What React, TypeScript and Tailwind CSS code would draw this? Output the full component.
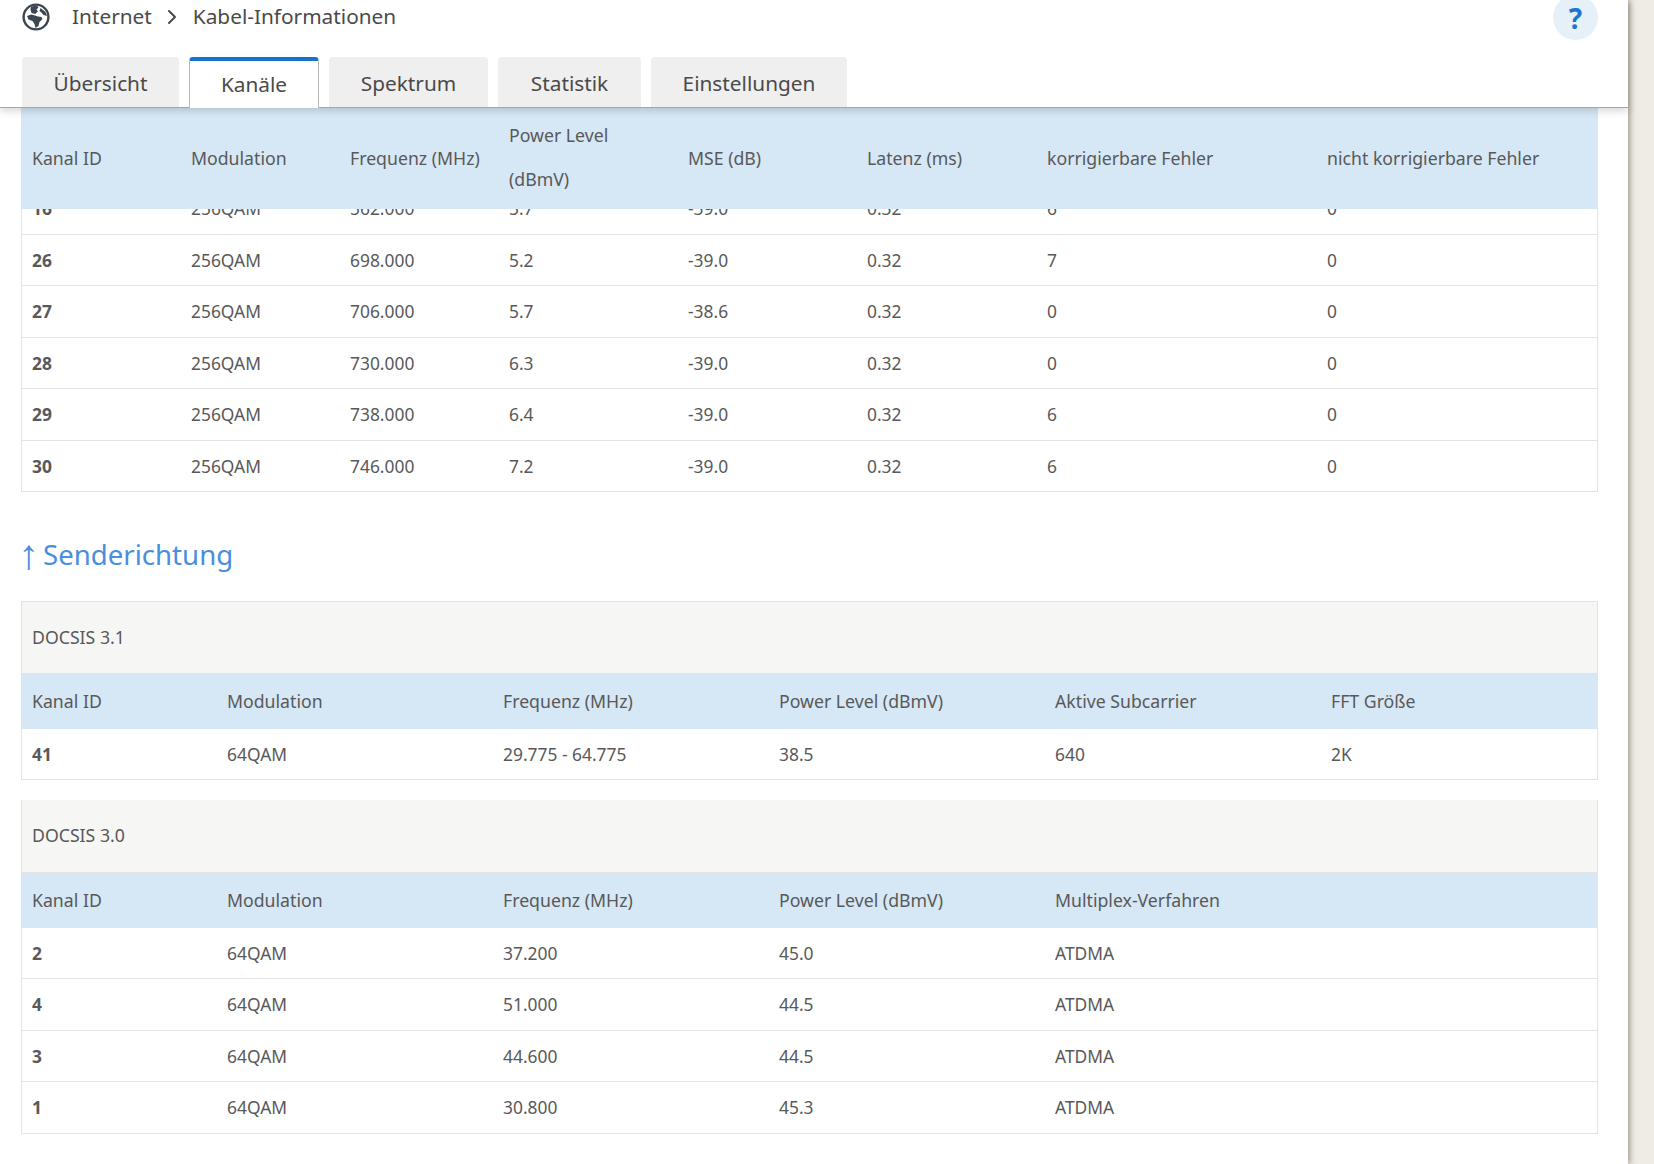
import { ChevronRight } from "lucide-react"

const downCols = "grid-cols-[159px_159px_159px_179px_179px_180px_280px_1fr]"
const upCols = "grid-cols-[195px_276px_276px_276px_276px_1fr]"

const tabs = [
  { label: "Übersicht", width: "w-[157px]" },
  { label: "Kanäle", width: "w-[130px]" },
  { label: "Spektrum", width: "w-[159px]" },
  { label: "Statistik", width: "w-[143px]" },
  { label: "Einstellungen", width: "w-[196px]" },
]
const downHead = ["Kanal ID", "Modulation", "Frequenz (MHz)", "", "MSE (dB)", "Latenz (ms)", "korrigierbare Fehler", "nicht korrigierbare Fehler"]

const downRows = [
  ["26", "256QAM", "698.000", "5.2", "-39.0", "0.32", "7", "0"],
  ["27", "256QAM", "706.000", "5.7", "-38.6", "0.32", "0", "0"],
  ["28", "256QAM", "730.000", "6.3", "-39.0", "0.32", "0", "0"],
  ["29", "256QAM", "738.000", "6.4", "-39.0", "0.32", "6", "0"],
  ["30", "256QAM", "746.000", "7.2", "-39.0", "0.32", "6", "0"],
]

const upHead31 = ["Kanal ID", "Modulation", "Frequenz (MHz)", "Power Level (dBmV)", "Aktive Subcarrier", "FFT Größe"]
const upHead30 = ["Kanal ID", "Modulation", "Frequenz (MHz)", "Power Level (dBmV)", "Multiplex-Verfahren", ""]

const upRows30 = [
  ["2", "64QAM", "37.200", "45.0", "ATDMA", ""],
  ["4", "64QAM", "51.000", "44.5", "ATDMA", ""],
  ["3", "64QAM", "44.600", "44.5", "ATDMA", ""],
  ["1", "64QAM", "30.800", "45.3", "ATDMA", ""],
]

function Globe() {
  return (
    <svg viewBox="0 0 28 28" className="h-7 w-7 shrink-0">
      <circle cx="14" cy="14" r="12.4" fill="#fff" stroke="#3c4650" strokeWidth="2.4" />
      <path d="M9 3.5l6-1 1.5 2-2 2 1.5 2-3 2.5-3.5-1-1-3.5z" fill="#3c4650" />
      <path d="M18.5 5l5 4 1.5 4-3.5-1-2-2.5-2-1.5z" fill="#3c4650" />
      <path d="M5 13l4-1.5 4 1 3 1 3.5 0.5 1 2-3 3-1 4-3 2-1-4-2-3-4-1.5z" fill="#3c4650" />
    </svg>
  )
}

function Row({ cells, cols, last }: { cells: string[]; cols: string; last?: boolean }) {
  return (
    <div className={`grid ${cols} items-center ${last ? "h-[50.5px]" : "h-[51.5px] border-b border-[#e3e3e3]"}`}>
      {cells.map((c, i) => (
        <div key={i} className={`pl-[10px] ${i === 0 ? "font-bold" : ""}`}>
          {c}
        </div>
      ))}
    </div>
  )
}

function UpTable({ title, head, rows, topBorder }: { title: string; head: string[]; rows: string[][]; topBorder?: boolean }) {
  return (
    <div className="border-x border-b border-[#e3e3e3]">
      <div className={`flex h-[72.5px] items-center border-b border-[#e3e3e3] bg-[#f6f6f4] pl-[10px] text-[17.7px] ${topBorder ? "border-t" : ""}`}>{title}</div>
      <div className={`grid ${upCols} h-[55px] items-center bg-[#d6e7f6] text-[17.7px]`}>
        {head.map((h, i) => (
          <div key={i} className="pl-[10px]">
            {h}
          </div>
        ))}
      </div>
      {rows.map((r, i) => (
        <Row key={i} cells={r} cols={upCols} last={i === rows.length - 1} />
      ))}
    </div>
  )
}

export default function App() {
  return (
    <div className="flex h-[1164px] w-full overflow-hidden bg-[#efece6] font-['Noto_Sans','Liberation_Sans',sans-serif] text-[17.4px] text-[#595959]">
      <div className="w-[1628px] shrink-0 bg-white shadow-[2px_0_6px_rgba(90,85,70,0.55)]">
        <header className="relative z-10 h-[108px] border-b border-[#a6a6a6] bg-white shadow-[0_3px_8px_rgba(0,0,0,0.16)]">
          <div className="flex h-[57px] items-start justify-between pl-[22px] pr-[30px]">
            <div className="flex h-[34px] items-center text-[20.8px] text-[#4a4a4a]">
              <Globe />
              <span className="ml-[22px]">Internet</span>
              <ChevronRight className="mx-[8px] h-[24px] w-[24px]" strokeWidth={2} />
              <span className="ml-[1px]">Kabel-Informationen</span>
            </div>
            <div className="-mt-[5px] flex h-[45px] w-[45px] items-center justify-center rounded-full bg-[#e5f0f9] text-[28px] font-bold text-[#1c75d0]">
              ?
            </div>
          </div>
          <div className="flex h-[51px] gap-[10px] pl-[22px] text-[20.8px] text-[#4a4a4a]">
            {tabs.map((t) =>
              t.label === "Kanäle" ? (
                <div
                  key={t.label}
                  className={`flex h-[51px] ${t.width} items-center justify-center rounded-t-[4px] border-x border-t-[4px] border-x-[#b9b9b9] border-t-[#1573cf] bg-white`}
                >
                  {t.label}
                </div>
              ) : (
                <div key={t.label} className={`flex h-[50px] ${t.width} items-center justify-center rounded-t-[4px] bg-[#efefef] pt-[3px]`}>
                  {t.label}
                </div>
              ),
            )}
          </div>
        </header>

        <main className="pl-[21px] pr-[30px]">
          <div className="border-x border-b border-[#e3e3e3]">
            <div className={`grid ${downCols} h-[101px] items-center bg-[#d6e7f6] text-[17.7px]`}>
              {downHead.map((h, i) =>
                i === 3 ? (
                  <div key={i} className="pb-[4px] pl-[10px] leading-[44px]">
                    Power Level
                    <br />
                    (dBmV)
                  </div>
                ) : (
                  <div key={i} className="pl-[10px]">
                    {h}
                  </div>
                ),
              )}
            </div>
            <div className="h-[25.5px] overflow-hidden border-b border-[#e3e3e3]">
              <div className={`grid ${downCols} -mt-[26px] h-[51px] items-center`}>
                {["16", "256QAM", "562.000", "5.7", "-39.0", "0.32", "6", "0"].map((c, i) => (
                  <div key={i} className={`pl-[10px] ${i === 0 ? "font-bold" : ""}`}>
                    {c}
                  </div>
                ))}
              </div>
            </div>
            {downRows.map((r, i) => (
              <Row key={i} cells={r} cols={downCols} last={i === downRows.length - 1} />
            ))}
          </div>

          <h2 className="flex h-[109px] items-center pt-[17px] text-[27.6px] text-[#4a8ede]">
            <span className="-ml-[3px] w-[25px] font-['Liberation_Sans',sans-serif] text-[42px] leading-none">↑</span>
            Senderichtung
          </h2>

          <div className="flex flex-col gap-[20px]">
            <UpTable title="DOCSIS 3.1" topBorder head={upHead31} rows={[["41", "64QAM", "29.775 - 64.775", "38.5", "640", "2K"]]} />
            <UpTable title="DOCSIS 3.0" head={upHead30} rows={upRows30} />
          </div>
        </main>
      </div>
    </div>
  )
}
